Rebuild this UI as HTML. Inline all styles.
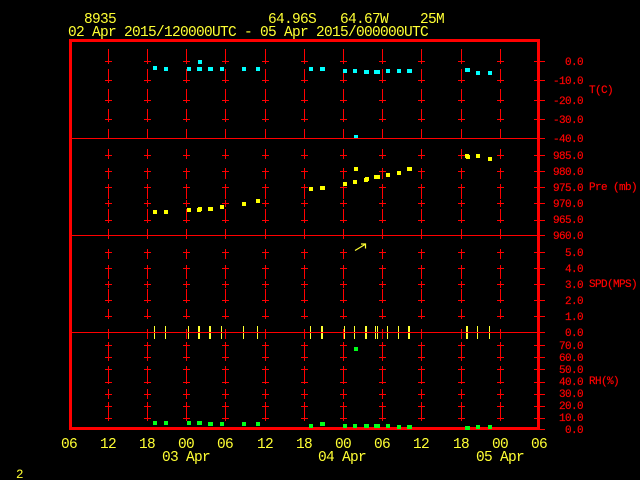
<!DOCTYPE html>
<html>
<head>
<meta charset="utf-8">
<style>
html,body{margin:0;padding:0;background:#000;width:640px;height:480px;overflow:hidden}
svg{display:block;position:absolute;left:0;top:0}
text{font-family:"Liberation Mono",monospace;white-space:pre}
.y{fill:#ffff33;font-size:14.5px;letter-spacing:-0.7px}
.r{fill:#ff0000;stroke:#ff0000;stroke-width:.2px;font-size:11px;letter-spacing:-0.6px}
.e{text-anchor:end}
</style>
</head>
<body>
<svg width="640" height="480" viewBox="0 0 640 480" shape-rendering="crispEdges">
<defs>
<g id="c" fill="#f00">
<rect x="0" y="49" width="1" height="15"/><rect x="0" y="69" width="1" height="14"/><rect x="0" y="89" width="1" height="14"/><rect x="0" y="109" width="1" height="13"/><rect x="0" y="129" width="1" height="9"/><rect x="0" y="149" width="1" height="10"/><rect x="0" y="168" width="1" height="11"/><rect x="0" y="184" width="1" height="15"/><rect x="0" y="200" width="1" height="7"/><rect x="0" y="209" width="1" height="14"/><rect x="0" y="229" width="1" height="10"/><rect x="0" y="249" width="1" height="10"/><rect x="0" y="265" width="1" height="14"/><rect x="0" y="281" width="1" height="7"/><rect x="0" y="289" width="1" height="14"/><rect x="0" y="309" width="1" height="10"/><rect x="0" y="329" width="1" height="10"/><rect x="0" y="342" width="1" height="19"/><rect x="0" y="366" width="1" height="18"/><rect x="0" y="389" width="1" height="10"/><rect x="0" y="402" width="1" height="19"/>
<path d="M-3 61h7v1h-7zM-3 80h7v1h-7zM-3 100h7v1h-7zM-3 119h7v1h-7zM-3 155h7v1h-7zM-3 171h7v1h-7zM-3 187h7v1h-7zM-3 203h7v1h-7zM-3 220h7v1h-7zM-3 252h7v1h-7zM-3 268h7v1h-7zM-3 284h7v1h-7zM-3 300h7v1h-7zM-3 316h7v1h-7zM-3 345h7v1h-7zM-3 357h7v1h-7zM-3 369h7v1h-7zM-3 382h7v1h-7zM-3 394h7v1h-7zM-3 406h7v1h-7zM-3 418h7v1h-7z"/>
</g>
</defs>
<rect width="640" height="480" fill="#000"/>
<use href="#c" x="108"/><use href="#c" x="147"/><use href="#c" x="186"/><use href="#c" x="225"/><use href="#c" x="265"/><use href="#c" x="304"/><use href="#c" x="343"/><use href="#c" x="382"/><use href="#c" x="421"/><use href="#c" x="461"/><use href="#c" x="500"/>

<!-- yellow wind bars -->
<g fill="#ffff33">
<rect x="154" y="326" width="1" height="13"/><rect x="165" y="326" width="1" height="13"/><rect x="188" y="326" width="1" height="13"/><rect x="198" y="326" width="2" height="13"/><rect x="209" y="326" width="2" height="13"/><rect x="221" y="326" width="1" height="13"/><rect x="243" y="326" width="1" height="13"/><rect x="257" y="326" width="1" height="13"/><rect x="310" y="326" width="1" height="13"/><rect x="321" y="326" width="2" height="13"/><rect x="344" y="326" width="1" height="13"/><rect x="354" y="326" width="1" height="13"/><rect x="365" y="326" width="2" height="13"/><rect x="375" y="326" width="1" height="13"/><rect x="377" y="326" width="1" height="13"/><rect x="387" y="326" width="1" height="13"/><rect x="398" y="326" width="1" height="13"/><rect x="408" y="326" width="2" height="13"/><rect x="466" y="326" width="2" height="13"/><rect x="477" y="326" width="1" height="13"/><rect x="489" y="326" width="1" height="13"/>
</g>

<!-- horizontal lines -->
<g fill="#f00">
<rect x="72" y="138" width="473" height="1"/><rect x="72" y="235" width="473" height="1"/><rect x="72" y="332" width="473" height="1"/>
<path d="M534 61h11v1h-11zM534 80h11v1h-11zM534 100h11v1h-11zM534 119h11v1h-11zM534 155h11v1h-11zM534 171h11v1h-11zM534 187h11v1h-11zM534 203h11v1h-11zM534 220h11v1h-11zM534 252h11v1h-11zM534 268h11v1h-11zM534 284h11v1h-11zM534 300h11v1h-11zM534 316h11v1h-11zM534 345h11v1h-11zM534 357h11v1h-11zM534 369h11v1h-11zM534 382h11v1h-11zM534 394h11v1h-11zM534 406h11v1h-11zM534 418h11v1h-11zM534 429h11v1h-11z"/>
<!-- frame -->
<rect x="69" y="39" width="471" height="3"/><rect x="69" y="427" width="471" height="3"/><rect x="69" y="39" width="3" height="391"/><rect x="537" y="39" width="3" height="391"/>
</g>

<!-- cyan temperature -->
<path fill="#00ffff" d="M153 66h4v4h-4zM164 67h4v4h-4zM187 67h4v4h-4zM197 67h5v4h-5zM198 60h4v4h-4zM208 67h5v4h-5zM220 67h4v4h-4zM242 67h4v4h-4zM256 67h4v4h-4zM309 67h4v4h-4zM320 67h5v4h-5zM343 69h4v4h-4zM353 69h4v4h-4zM364 70h5v4h-5zM374 70h6v4h-6zM386 69h4v4h-4zM397 69h4v4h-4zM407 69h5v4h-5zM465 68h5v4h-5zM476 71h4v4h-4zM488 71h4v4h-4zM354 135h4v3h-4z"/>
<!-- yellow pressure -->
<path fill="#ffff00" d="M153 210h4v4h-4zM164 210h4v4h-4zM187 208h4v4h-4zM197 208h4v4h-4zM198 207h4v4h-4zM208 207h5v4h-5zM220 205h4v4h-4zM242 202h4v4h-4zM256 199h4v4h-4zM309 187h4v4h-4zM320 186h5v4h-5zM343 182h4v4h-4zM353 180h4v4h-4zM354 167h4v4h-4zM364 178h4v4h-4zM365 177h4v4h-4zM374 175h6v4h-6zM386 173h4v4h-4zM397 171h4v4h-4zM407 167h5v4h-5zM465 154h4v4h-4zM466 155h4v4h-4zM476 154h4v4h-4zM488 157h4v4h-4z"/>
<!-- green RH -->
<path fill="#00ff1a" d="M153 421h4v4h-4zM164 421h4v4h-4zM187 421h4v4h-4zM197 421h5v4h-5zM208 422h5v4h-5zM220 422h4v4h-4zM242 422h4v4h-4zM256 422h4v4h-4zM309 424h4v4h-4zM320 422h5v4h-5zM343 424h4v4h-4zM353 424h4v4h-4zM364 424h5v4h-5zM374 424h6v4h-6zM386 424h4v4h-4zM397 425h4v4h-4zM407 425h5v4h-5zM465 426h5v4h-5zM476 425h4v4h-4zM488 425h4v4h-4zM354 347h4v4h-4z"/>

<!-- arrow -->
<path fill="none" stroke="#ffff33" stroke-width="1.2" shape-rendering="auto" d="M355 250.5L365 244.5M361 244H365.5V248.5"/>

<!-- text -->
<g shape-rendering="auto">
<text class="y" x="84" y="23">8935</text>
<text class="y" x="268" y="23">64.96S</text>
<text class="y" x="340" y="23">64.67W</text>
<text class="y" x="420" y="23">25M</text>
<text class="y" x="68" y="36">02 Apr 2015/120000UTC - 05 Apr 2015/000000UTC</text>

<text class="y" x="61" y="448">06</text>
<text class="y" x="100" y="448">12</text>
<text class="y" x="139" y="448">18</text>
<text class="y" x="178" y="448">00</text>
<text class="y" x="217" y="448">06</text>
<text class="y" x="257" y="448">12</text>
<text class="y" x="296" y="448">18</text>
<text class="y" x="335" y="448">00</text>
<text class="y" x="374" y="448">06</text>
<text class="y" x="413" y="448">12</text>
<text class="y" x="453" y="448">18</text>
<text class="y" x="492" y="448">00</text>
<text class="y" x="531" y="448">06</text>
<text class="y" x="162" y="461">03 Apr</text>
<text class="y" x="318" y="461">04 Apr</text>
<text class="y" x="476" y="461">05 Apr</text>
<text class="y" x="16" y="478" style="font-size:12.5px;letter-spacing:0">2</text>

<text class="r e" x="583" y="65">0.0</text>
<text class="r e" x="583" y="84">-10.0</text>
<text class="r e" x="583" y="104">-20.0</text>
<text class="r e" x="583" y="123">-30.0</text>
<text class="r e" x="583" y="142">-40.0</text>
<text class="r e" x="583" y="159">985.0</text>
<text class="r e" x="583" y="175">980.0</text>
<text class="r e" x="583" y="191">975.0</text>
<text class="r e" x="583" y="207">970.0</text>
<text class="r e" x="583" y="223">965.0</text>
<text class="r e" x="583" y="239">960.0</text>
<text class="r e" x="583" y="256">5.0</text>
<text class="r e" x="583" y="272">4.0</text>
<text class="r e" x="583" y="288">3.0</text>
<text class="r e" x="583" y="304">2.0</text>
<text class="r e" x="583" y="320">1.0</text>
<text class="r e" x="583" y="336">0.0</text>
<text class="r e" x="583" y="349">70.0</text>
<text class="r e" x="583" y="361">60.0</text>
<text class="r e" x="583" y="373">50.0</text>
<text class="r e" x="583" y="385">40.0</text>
<text class="r e" x="583" y="397">30.0</text>
<text class="r e" x="583" y="409">20.0</text>
<text class="r e" x="583" y="421">10.0</text>
<text class="r e" x="583" y="433">0.0</text>
<text class="r" x="589" y="93">T(C)</text>
<text class="r" x="589" y="190">Pre (mb)</text>
<text class="r" x="589" y="287">SPD(MPS)</text>
<text class="r" x="589" y="384">RH(%)</text>
</g>
</svg>
</body>
</html>
